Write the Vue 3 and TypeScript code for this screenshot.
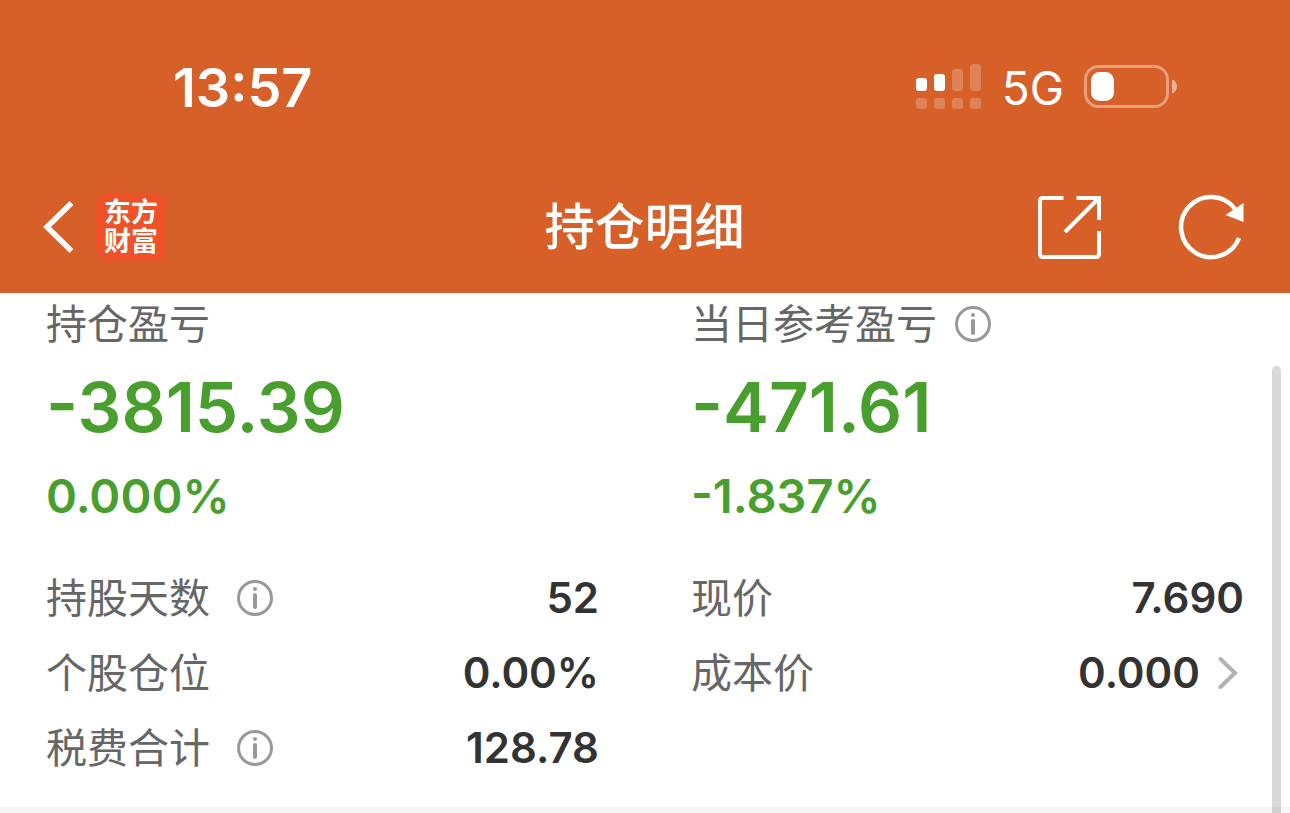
<script setup lang="ts">
interface Summary {
  label: string
  amount: string
  percent: string
  info: boolean
}

interface Detail {
  label: string
  value: string
  info?: boolean
  link?: boolean
}

const summaries: Summary[] = [
  { label: '持仓盈亏', amount: '-3815.39', percent: '0.000%', info: false },
  { label: '当日参考盈亏', amount: '-471.61', percent: '-1.837%', info: true },
]

const details: Detail[][] = [
  [
    { label: '持股天数', value: '52', info: true },
    { label: '个股仓位', value: '0.00%' },
    { label: '税费合计', value: '128.78', info: true },
  ],
  [
    { label: '现价', value: '7.690' },
    { label: '成本价', value: '0.000', link: true },
  ],
]
</script>

<template>
  <div class="page">
    <header class="header">
      <div class="status">
        <time class="clock">13:57</time>
        <div class="indicators">
          <svg class="signal" width="66" height="46" viewBox="0 0 66 46" fill="#fff" aria-hidden="true">
            <rect x="0" y="13" width="11" height="13" rx="3" />
            <rect x="18" y="9" width="11" height="17" rx="3" />
            <g opacity="0.22">
              <rect x="36" y="4" width="11" height="22" rx="3" />
              <rect x="54" y="-1" width="11" height="27" rx="3" />
              <rect x="0" y="33" width="11" height="11" rx="3" />
              <rect x="18" y="33" width="11" height="11" rx="3" />
              <rect x="36" y="33" width="11" height="11" rx="3" />
              <rect x="54" y="33" width="11" height="11" rx="3" />
            </g>
          </svg>
          <span class="network">5G</span>
          <svg class="battery" width="94" height="46" viewBox="0 0 94 46" aria-hidden="true">
            <rect x="1.5" y="1.5" width="82" height="40" rx="13" fill="none" stroke="#fff" stroke-opacity="0.4" stroke-width="3" />
            <path d="M88 14.500C91 15.500 93 18.500 93 21.500S91 27.500 88 28.500Z" fill="#fff" fill-opacity="0.5" />
            <rect x="7" y="7" width="23" height="29" rx="8.500" fill="#fff" />
          </svg>
        </div>
      </div>
      <nav class="nav">
        <div class="side">
          <button class="icon-button" type="button" aria-label="返回">
            <svg width="32" height="54" viewBox="0 0 32 54" fill="none" stroke="#fff" stroke-width="5.500" aria-hidden="true">
              <path d="M28.500 3L4 27L28.500 51" />
            </svg>
          </button>
          <a class="brand" href="#"><span class="brand-name">东方财富</span></a>
        </div>
        <h1 class="title">持仓明细</h1>
        <div class="side actions">
          <button class="icon-button" type="button" aria-label="分享">
            <svg width="64" height="64" viewBox="0 0 64 64" fill="none" stroke="#fff" stroke-width="4" aria-hidden="true">
              <path d="M25.500 3H5Q2 3 2 6V59Q2 62 5 62H58Q61 62 61 59V36" />
              <path d="M38.500 3H61V25M60 4L27 37" />
            </svg>
          </button>
          <button class="icon-button" type="button" aria-label="刷新">
            <svg width="68" height="66" viewBox="0 0 68 66" aria-hidden="true">
              <path d="M61 44A30 30 0 1 1 57 15" fill="none" stroke="#fff" stroke-width="4.500" />
              <path d="M65.500 9V28L47.500 21Z" fill="#fff" />
            </svg>
          </button>
        </div>
      </nav>
    </header>

    <main class="content">
      <section class="columns">
        <div v-for="item in summaries" :key="item.label">
          <h2 class="label heading">
            {{ item.label }}
            <button v-if="item.info" class="icon-button" type="button" aria-label="当日参考盈亏说明">
              <svg width="36" height="36" viewBox="0 0 36 36" aria-hidden="true">
                <circle cx="18" cy="18" r="16.500" fill="none" stroke="#999" stroke-width="3" />
                <circle cx="18" cy="9" r="2" fill="#999" />
                <path d="M18 15V27" stroke="#999" stroke-width="4" stroke-linecap="round" />
              </svg>
            </button>
          </h2>
          <div class="amount">{{ item.amount }}</div>
          <div class="percent">{{ item.percent }}</div>
        </div>
      </section>
      <section class="columns details">
        <dl v-for="(column, index) in details" :key="index" class="list">
          <div v-for="row in column" :key="row.label" class="row">
            <dt class="label term">
              {{ row.label }}
              <button v-if="row.info" class="icon-button" type="button" :aria-label="row.label + '说明'">
                <svg width="36" height="36" viewBox="0 0 36 36" aria-hidden="true">
                  <circle cx="18" cy="18" r="16.500" fill="none" stroke="#999" stroke-width="3" />
                  <circle cx="18" cy="9" r="2" fill="#999" />
                  <path d="M18 15V27" stroke="#999" stroke-width="4" stroke-linecap="round" />
                </svg>
              </button>
            </dt>
            <dd class="value">
              {{ row.value }}
              <button v-if="row.link" class="icon-button chevron" type="button" :aria-label="row.label + '详情'">
                <svg width="20" height="34" viewBox="0 0 20 34" fill="none" stroke="#b2b2b2" stroke-width="4" stroke-linecap="round" aria-hidden="true">
                  <path d="M2.500 3L17 17L2.500 31" />
                </svg>
              </button>
            </dd>
          </div>
        </dl>
      </section>
    </main>
    <div class="scrollbar"></div>
  </div>
</template>

<style>
body {
  margin: 0;
}
</style>

<style scoped>
.page {
  position: relative;
  min-height: 100vh;
  background: #f6f6f8;
  font-family: Inter, "Noto Sans CJK SC", sans-serif;
  overflow: hidden;
}

.header {
  background: #d75f28;
  color: #fff;
}

.status {
  display: flex;
  align-items: center;
  justify-content: space-between;
  height: 130px;
  padding: 46px 112px 0 173px;
  box-sizing: border-box;
}

.signal {
  overflow: visible;
}

.clock {
  font-size: 54px;
  font-weight: 600;
  line-height: 84px;
}

.indicators {
  display: flex;
  align-items: center;
  gap: 20px;
}

.network {
  font-size: 46px;
  font-weight: 400;
  line-height: 84px;
}

.nav {
  display: grid;
  grid-template-columns: 1fr auto 1fr;
  align-items: center;
  height: 163px;
  padding: 31px 44px 0 43px;
  box-sizing: border-box;
}

.side {
  display: flex;
  align-items: center;
  gap: 21px;
}

.actions {
  justify-content: flex-end;
  gap: 76px;
}

.icon-button {
  display: flex;
  flex: none;
  margin: 0;
  padding: 0;
  border: 0;
  background: none;
  cursor: pointer;
}

.brand {
  display: flex;
  align-items: center;
  justify-content: center;
  width: 70px;
  height: 68px;
  border-radius: 12px;
  background: #ee5229;
  color: #fff;
  font-family: "Noto Sans CJK SC", sans-serif;
  font-size: 27px;
  font-weight: 700;
  line-height: 29px;
  text-decoration: none;
}

.brand-name {
  display: block;
  width: 54px;
  padding-bottom: 4px;
}

.title {
  margin: 0;
  font-size: 50px;
  font-weight: 500;
  line-height: 72px;
}

.content {
  padding-bottom: 22px;
  background: #fff;
}

.columns {
  display: grid;
  grid-template-columns: 1fr 1fr;
  gap: 92px;
  padding: 0 46px;
}

.label {
  display: flex;
  align-items: center;
  margin: 0;
  color: #666;
  font-size: 41px;
  font-weight: 400;
  line-height: 62px;
}

.heading {
  gap: 18px;
}

.amount {
  color: #489f2e;
  font-size: 69px;
  font-weight: 600;
  line-height: 104px;
}

.percent {
  color: #489f2e;
  font-size: 47px;
  font-weight: 600;
  line-height: 74px;
}

.details {
  padding-top: 27px;
}

.list {
  margin: 0;
}

.row {
  display: flex;
  align-items: center;
  justify-content: space-between;
  height: 75px;
}

.term {
  gap: 27px;
}

.value {
  display: flex;
  align-items: center;
  gap: 18px;
  margin: 0;
  color: #333;
  font-size: 42px;
  font-weight: 600;
}

.chevron {
  margin-right: 6px;
}

.scrollbar {
  position: absolute;
  top: 366px;
  right: 9px;
  bottom: 0;
  width: 9px;
  border-radius: 5px 5px 0 0;
  background: rgba(0, 0, 0, 0.15);
}
</style>
